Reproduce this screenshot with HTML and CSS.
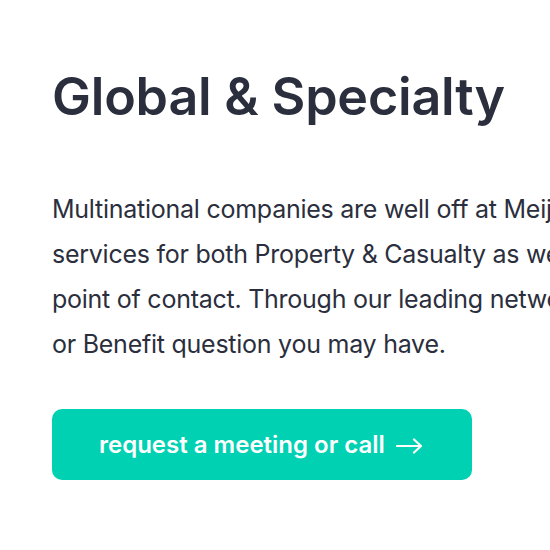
FILE: index.html
```html
<!DOCTYPE html>
<html lang="en">
<head>
<meta charset="utf-8">
<title>Global &amp; Specialty</title>
<link rel="stylesheet" href="styles.css">
</head>
<body>
<main class="section">
  <h1 class="title">Global &amp; Specialty</h1>
  <p class="lead">
    <span class="line">Multinational companies are well off at Meijers Assurantiën. We offer</span>
    <span class="line">services for both Property &amp; Casualty as well as Employee Benefits with one</span>
    <span class="line">point of contact. Through our leading network we can answer any Property</span>
    <span class="line">or Benefit question you may have.</span>
  </p>
  <a class="cta" href="#">
    <span class="cta-label">request a meeting or call</span>
    <svg class="arrow" width="27" height="16" viewBox="0 0 27 16" aria-hidden="true">
      <path d="M1 8H25M18 1.5L25 8L18 14.5" fill="none" stroke="#ffffff" stroke-width="2.2" stroke-linecap="round" stroke-linejoin="round"/>
    </svg>
  </a>
</main>
</body>
</html>
```
FILE: styles.css
```css
html, body {
  margin: 0;
  padding: 0;
  background: #ffffff;
  overflow: hidden;
}
.section {
  padding: 62px 0 0 52px;
  display: flex;
  flex-direction: column;
  align-items: flex-start;
  font-family: Inter, "Open Sans", sans-serif;
  color: #2b2f3d;
}
.title {
  margin: 0;
  font-size: 52px;
  font-weight: 600;
  line-height: 70px;
  letter-spacing: -0.2px;
}
.lead {
  margin: 55px 0 0;
  font-size: 25px;
  font-weight: 400;
  line-height: 45px;
  letter-spacing: -0.25px;
}
.line {
  display: block;
  white-space: nowrap;
}
.cta {
  margin-top: 42px;
  width: 420px;
  height: 71px;
  box-sizing: border-box;
  padding-left: 47px;
  display: flex;
  align-items: center;
  gap: 11px;
  background: #00d1b2;
  border-radius: 10px;
  color: #ffffff;
  text-decoration: none;
  font-size: 24px;
  font-weight: 600;
}
.arrow {
  display: block;
  flex: none;
  margin-top: 2px;
}
```
